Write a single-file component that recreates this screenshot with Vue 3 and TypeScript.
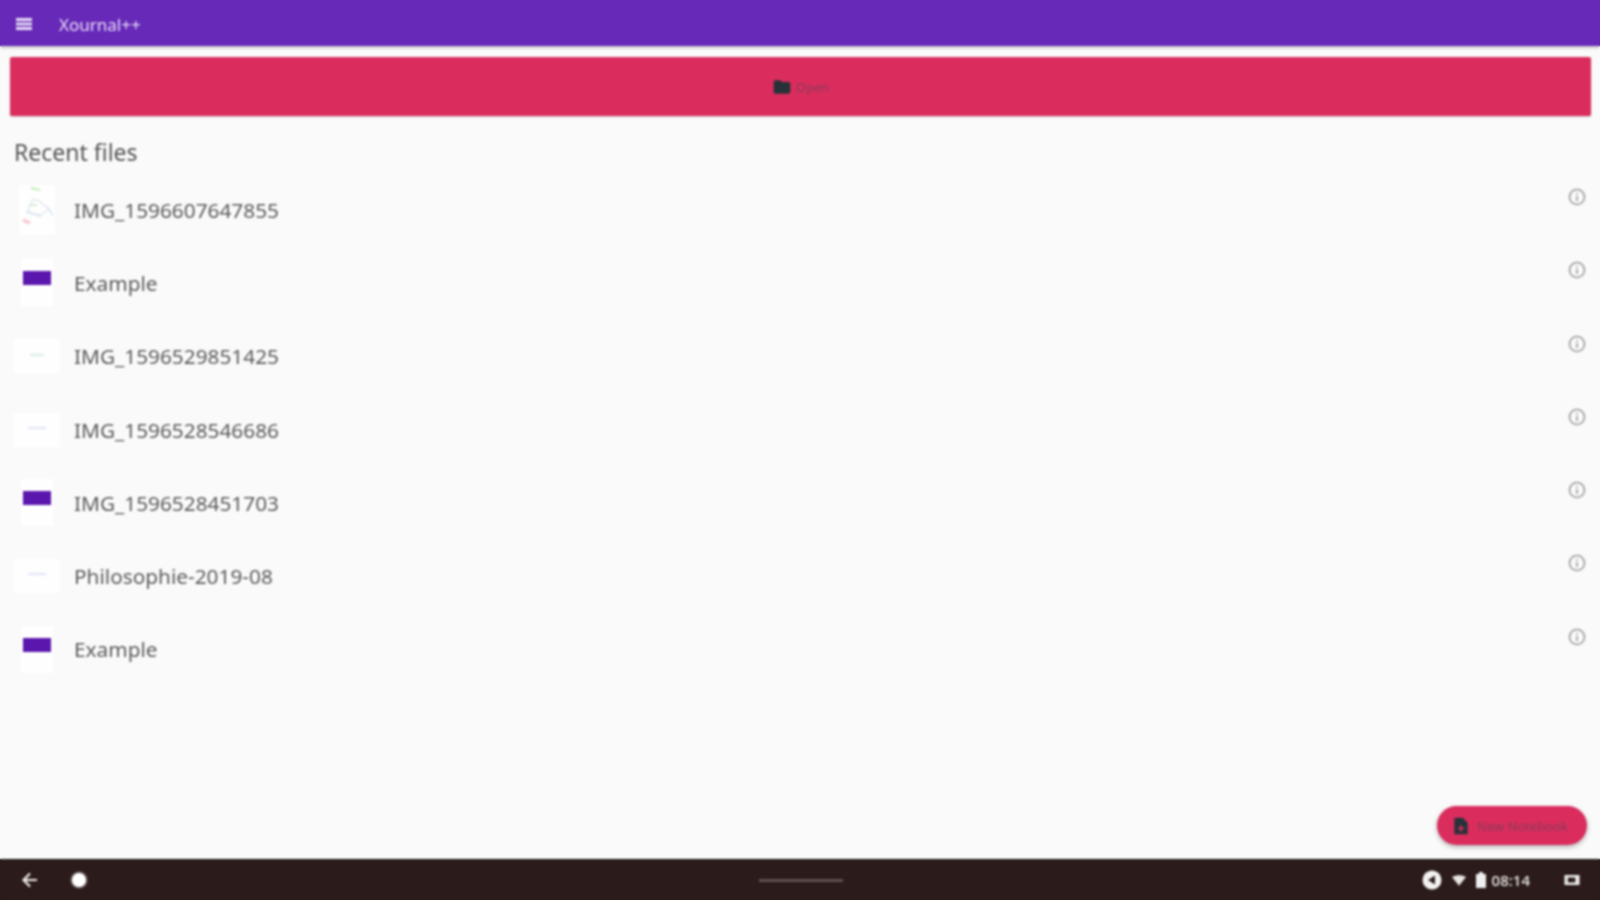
<script setup lang="ts">
interface RecentFile {
  name: string
  thumb: 'sketch' | 'banner' | 'green' | 'faint'
}

const files: RecentFile[] = [
  { name: 'IMG_1596607647855', thumb: 'sketch' },
  { name: 'Example', thumb: 'banner' },
  { name: 'IMG_1596529851425', thumb: 'green' },
  { name: 'IMG_1596528546686', thumb: 'faint' },
  { name: 'IMG_1596528451703', thumb: 'banner' },
  { name: 'Philosophie-2019-08', thumb: 'faint' },
  { name: 'Example', thumb: 'banner' },
]
</script>

<template>
  <div class="screen">
    <header class="appbar">
      <svg class="menu" viewBox="0 0 16 12" width="16" height="12" aria-hidden="true">
        <path d="M0 0h16v3H0zM0 4.500h16v3H0zM0 9h16v3H0z" fill="#e6dcf5" />
      </svg>
      <span class="title">Xournal++</span>
    </header>

    <main class="content">
      <button class="open">
        <svg viewBox="0 0 24 24" width="20" height="20" aria-hidden="true">
          <path d="M10 4H4a2 2 0 0 0-2 2v12a2 2 0 0 0 2 2h16a2 2 0 0 0 2-2V8a2 2 0 0 0-2-2h-8z" fill="#263238" />
        </svg>
        <span>Open</span>
      </button>

      <h2 class="heading">Recent files</h2>

      <ul class="list">
        <li v-for="(file, i) in files" :key="i" class="row">
          <div class="slot">
            <div class="thumb" :class="file.thumb">
              <svg v-if="file.thumb === 'sketch'" viewBox="0 0 36 50" width="36" height="50" aria-hidden="true">
                <path d="M12 3l9 2" stroke="#c4eeb6" stroke-width="2" fill="none" />
                <path d="M14 14l-6 14 14 2 8-6-10-8z" stroke="#e4eaf0" stroke-width="1.500" fill="none" />
                <path d="M8 26l14 6M28 22l6 8" stroke="#dde6ef" stroke-width="1.500" fill="none" />
                <path d="M10 20h8" stroke="#d7edd2" stroke-width="2" fill="none" />
                <path d="M4 35l7 3" stroke="#f8c8d2" stroke-width="3" fill="none" />
              </svg>
              <div v-else-if="file.thumb === 'banner'" class="strip"></div>
              <svg v-else-if="file.thumb === 'green'" viewBox="0 0 46 34" width="46" height="34" aria-hidden="true">
                <path d="M16 16h14" stroke="#e4f2ea" stroke-width="3" fill="none" />
              </svg>
              <svg v-else viewBox="0 0 46 34" width="46" height="34" aria-hidden="true">
                <path d="M14 15h18" stroke="#e6e8f9" stroke-width="2.500" fill="none" />
              </svg>
            </div>
          </div>
          <span class="name">{{ file.name }}</span>
          <svg class="info" viewBox="0 0 20 20" width="20" height="20" aria-hidden="true">
            <circle cx="10" cy="10" r="7.500" fill="none" stroke="#9a9a9a" stroke-width="1.600" />
            <path d="M10 6v1.600M10 9v5" stroke="#9a9a9a" stroke-width="1.600" fill="none" />
          </svg>
        </li>
      </ul>

      <button class="fab">
        <svg viewBox="0 0 24 24" width="20" height="20" aria-hidden="true">
          <path d="M6 2h8l6 6v14H4V4a2 2 0 0 1 2-2z" fill="#263238" />
          <path d="M12 11v8M8 15h8" stroke="#da2d5e" stroke-width="2" fill="none" />
        </svg>
        <span>New Notebook</span>
      </button>
    </main>

    <footer class="navbar">
      <div class="nav-left">
        <svg viewBox="0 0 20 20" width="20" height="20" aria-hidden="true">
          <path d="M17 10H4M10 3.500L3.500 10l6.500 6.500" stroke="#f0ecec" stroke-width="2.200" fill="none" />
        </svg>
        <span class="home"></span>
      </div>
      <span class="handle"></span>
      <div class="status">
        <svg viewBox="0 0 20 20" width="20" height="20" aria-hidden="true">
          <circle cx="10" cy="10" r="9.500" fill="#f4f2f2" />
          <path d="M13 5.500v9L6 10z" fill="#2b1c1b" />
        </svg>
        <svg class="wifi" viewBox="0 0 16 12" width="14" height="11" aria-hidden="true">
          <path d="M0 2C4.500-.6 11.500-.6 16 2L8 12z" fill="#e9e6e6" />
        </svg>
        <svg class="battery" viewBox="0 0 10 16" width="10" height="16" aria-hidden="true">
          <path d="M3 0h4v2h3v14H0V2h3z" fill="#f0eeee" />
        </svg>
        <span class="time">08:14</span>
        <svg class="cam" viewBox="0 0 18 12" width="18" height="10" aria-hidden="true">
          <path fill-rule="evenodd" d="M0 0h18v12H0zM4 3v6h9V3z" fill="#f0eeee" />
        </svg>
      </div>
    </footer>
  </div>
</template>

<style>
html, body { margin: 0; }
html {
  background: linear-gradient(#6729b8 0 46px, #fafafa 46px 859px, #2b1c1b 859px) no-repeat;
  background-size: 100% 900px;
}
</style>

<style scoped>
.screen {
  width: 1600px;
  height: 900px;
  display: flex;
  flex-direction: column;
  overflow: hidden;
  background: #fafafa;
  font-family: "Noto Sans", "Open Sans", sans-serif;
  filter: blur(0.9px);
}
.appbar {
  height: 46px;
  flex: none;
  box-sizing: border-box;
  display: flex;
  align-items: center;
  gap: 27px;
  padding: 2px 0 0 16px;
  background: #6729b8;
  box-shadow: 0 2px 3px rgba(0, 0, 0, 0.2);
  position: relative;
  z-index: 1;
}
.title {
  color: #e9def7;
  font-size: 17px;
}
.content {
  flex: 1;
  min-height: 0;
  position: relative;
  padding: 11px 9px 0 10px;
  display: flex;
  flex-direction: column;
}
.open {
  height: 59px;
  flex: none;
  display: flex;
  align-items: center;
  justify-content: center;
  gap: 4px;
  border: none;
  border-radius: 2px;
  padding: 0;
  background: #da2d5e;
  color: #8c3a56;
  font: inherit;
  font-size: 13px;
  box-shadow: 0 1px 2px rgba(0, 0, 0, 0.2);
}
.heading {
  margin: 20px 0 0 4px;
  font-size: 23px;
  line-height: 32px;
  font-weight: 400;
  color: #555;
}
.list {
  list-style: none;
  margin: 5px 0 0;
  padding: 0;
}
.row {
  height: 73.300px;
  display: flex;
  align-items: center;
  position: relative;
}
.slot {
  width: 46px;
  margin-left: 4px;
  flex: none;
  display: flex;
  justify-content: center;
}
.thumb {
  background: #fefefe;
  display: flex;
  justify-content: center;
  align-items: flex-start;
}
.thumb.sketch {
  width: 36px;
  height: 50px;
}
.thumb.banner {
  width: 32px;
  height: 47px;
}
.thumb.green,
.thumb.faint {
  width: 46px;
  height: 34px;
}
.strip {
  width: 28px;
  height: 14px;
  margin-top: 12px;
  background: #5a16ad;
}
.name {
  margin-left: 14px;
  font-size: 20.800px;
  color: #5a5a5a;
}
.info {
  position: absolute;
  right: 4px;
  top: 14px;
}
.fab {
  position: absolute;
  right: 13px;
  bottom: 14px;
  width: 150px;
  height: 39px;
  display: flex;
  align-items: center;
  gap: 6px;
  padding: 0 0 0 14px;
  border: none;
  border-radius: 20px;
  background: #da2d5e;
  color: #8c3a56;
  font: inherit;
  font-size: 13px;
  box-shadow: 0 2px 5px rgba(0, 0, 0, 0.3);
}
.navbar {
  height: 41px;
  flex: none;
  position: relative;
  display: flex;
  align-items: center;
  justify-content: space-between;
  background: #2b1c1b;
  border-top: 1px solid #111;
  box-sizing: border-box;
}
.nav-left {
  display: flex;
  align-items: center;
  gap: 32px;
  padding-left: 20px;
}
.home {
  width: 14px;
  height: 14px;
  border-radius: 50%;
  background: #fff;
  box-shadow: 0 0 3px #fff;
}
.handle {
  position: absolute;
  left: 759px;
  top: 19px;
  width: 84px;
  height: 3px;
  background: #5d5050;
}
.status {
  display: flex;
  align-items: center;
  padding-right: 19px;
}
.wifi {
  margin-left: 10px;
}
.battery {
  margin-left: 10px;
}
.time {
  color: #f0eeee;
  font-size: 15px;
  font-weight: 500;
  margin-left: 6px;
}
.cam {
  margin-left: 33px;
}
</style>
